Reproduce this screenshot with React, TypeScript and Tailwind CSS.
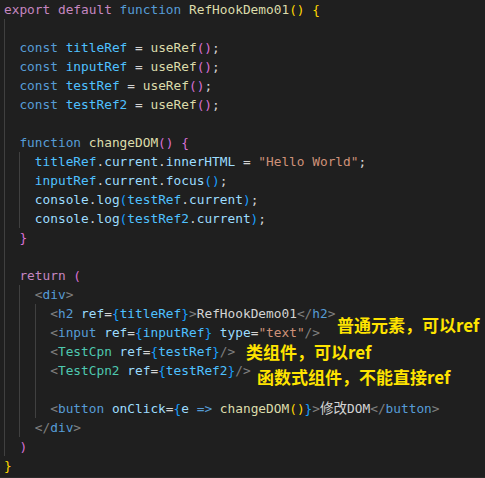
type Tok = [string, string]

const P = "text-[#d4d4d4]"
const KW = "text-[#c586c0]"
const BL = "text-[#569cd6]"
const FN = "text-[#dcdcaa]"
const VR = "text-[#9cdcfe]"
const CN = "text-[#4fc1ff]"
const ST = "text-[#ce9178]"
const GD = "text-[#ffd700]"
const OR = "text-[#da70d6]"
const BB = "text-[#179fff]"
const TG = "text-[#808080]"
const CP = "text-[#4ec9b0]"

// [guides, tokens]
const lines: [number, Tok[]][] = [
  [0, [["export", KW], [" ", P], ["default", KW], [" ", P], ["function", BL], [" ", P], ["RefHookDemo01", FN], ["()", GD], [" ", P], ["{", GD]]],
  [1, []],
  [1, [["const", BL], [" ", P], ["titleRef", CN], [" = ", P], ["useRef", FN], ["()", OR], [";", P]]],
  [1, [["const", BL], [" ", P], ["inputRef", CN], [" = ", P], ["useRef", FN], ["()", OR], [";", P]]],
  [1, [["const", BL], [" ", P], ["testRef", CN], [" = ", P], ["useRef", FN], ["()", OR], [";", P]]],
  [1, [["const", BL], [" ", P], ["testRef2", CN], [" = ", P], ["useRef", FN], ["()", OR], [";", P]]],
  [1, []],
  [1, [["function", BL], [" ", P], ["changeDOM", FN], ["()", OR], [" ", P], ["{", OR]]],
  [2, [["titleRef", CN], [".", P], ["current", VR], [".", P], ["innerHTML", VR], [" = ", P], ['"Hello World"', ST], [";", P]]],
  [2, [["inputRef", CN], [".", P], ["current", VR], [".", P], ["focus", VR], ["()", BB], [";", P]]],
  [2, [["console", VR], [".", P], ["log", VR], ["(", BB], ["testRef", CN], [".", P], ["current", VR], [")", BB], [";", P]]],
  [2, [["console", VR], [".", P], ["log", VR], ["(", BB], ["testRef2", CN], [".", P], ["current", VR], [")", BB], [";", P]]],
  [1, [["}", OR]]],
  [1, []],
  [1, [["return", KW], [" ", P], ["(", OR]]],
  [2, [["<", TG], ["div", BL], [">", TG]]],
  [3, [["<", TG], ["h2", BL], [" ", P], ["ref", VR], ["=", P], ["{", BB], ["titleRef", CN], ["}", BB], [">", TG], ["RefHookDemo01", P], ["</", TG], ["h2", BL], [">", TG]]],
  [3, [["<", TG], ["input", BL], [" ", P], ["ref", VR], ["=", P], ["{", BB], ["inputRef", CN], ["}", BB], [" ", P], ["type", VR], ["=", P], ['"text"', ST], ["/>", TG]]],
  [3, [["<", TG], ["TestCpn", CP], [" ", P], ["ref", VR], ["=", P], ["{", BB], ["testRef", CN], ["}", BB], ["/>", TG]]],
  [3, [["<", TG], ["TestCpn2", CP], [" ", P], ["ref", VR], ["=", P], ["{", BB], ["testRef2", CN], ["}", BB], ["/>", TG]]],
  [3, []],
  [3, [["<", TG], ["button", BL], [" ", P], ["onClick", VR], ["=", P], ["{", BB], ["e", VR], [" ", P], ["=>", BL], [" ", P], ["changeDOM", FN], ["()", GD], ["}", BB], [">", TG], ["修改", "text-[#d4d4d4] text-[13.5px]"], ["DOM", P], ["</", TG], ["button", BL], [">", TG]]],
  [2, [["</", TG], ["div", BL], [">", TG]]],
  [1, [[")", OR]]],
  [0, [["}", GD]]],
]

function Line({ guides, toks }: { guides: number; toks: Tok[] }) {
  const g = Array.from({ length: guides })
  return (
    <div className="flex h-[19px] whitespace-pre leading-[19px]">
      {g.map((_, i) => (
        <span key={i} className="w-[2ch] shrink-0 border-l border-[#404040]" />
      ))}
      {toks.map(([t, c], i) => (
        <span key={i} className={c}>
          {t}
        </span>
      ))}
    </div>
  )
}

export default function App() {
  return (
    <div className="relative h-[478px] w-[485px] overflow-hidden border-b border-[#2a2a2a] bg-[#1f1f1f]">
      <div className="pl-[4px] font-['DejaVu_Sans_Mono','Noto_Sans_CJK_SC',monospace] text-[12.8px]">
        {lines.map(([g, t], i) => (
          <Line key={i} guides={g} toks={t} />
        ))}
      </div>

      {/* annotations */}
      <div className="absolute left-[337px] top-[316px] whitespace-nowrap font-['Noto_Sans_CJK_SC',sans-serif] text-[17px] font-bold leading-[17px] text-[#ffe400]">
        普通元素，可以ref
      </div>
      <div className="absolute left-[246px] top-[343px] whitespace-nowrap font-['Noto_Sans_CJK_SC',sans-serif] text-[17px] font-bold leading-[17px] text-[#ffe400]">
        类组件，可以ref
      </div>
      <div className="absolute left-[257px] top-[368px] whitespace-nowrap font-['Noto_Sans_CJK_SC',sans-serif] text-[17px] font-bold leading-[17px] text-[#ffe400]">
        函数式组件，不能直接ref
      </div>
    </div>
  )
}
